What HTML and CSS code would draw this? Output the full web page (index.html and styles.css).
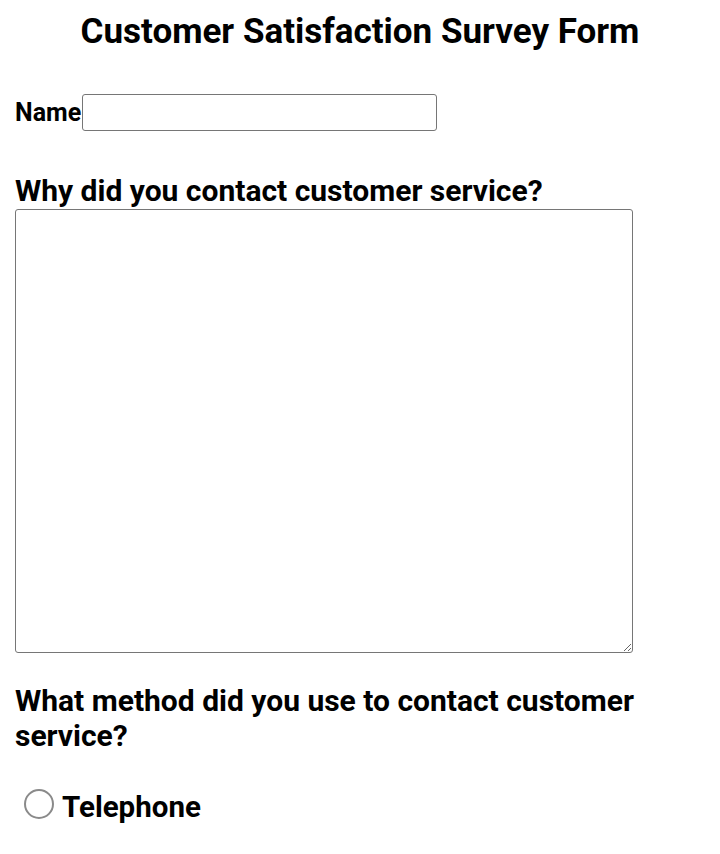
FILE: index.html
```html
<!DOCTYPE html>
<html>
<head>
<meta charset="utf-8">
<link rel="stylesheet" href="styles.css">
</head>
<body>
<h1 class="title">Customer Satisfaction Survey Form</h1>
<form class="form">
  <div class="name-row">
    <label class="name-label" for="name">Name</label><input class="name-input" id="name" type="text">
  </div>
  <label class="question" for="why">Why did you contact customer service?</label>
  <textarea class="why" id="why"></textarea>
  <p class="question method">What method did you use to contact customer service?</p>
  <label class="radio-row"><input class="radio" type="radio" name="method"><span class="radio-text">Telephone</span></label>
</form>
</body>
</html>
```
FILE: styles.css
```css
html, body {
  margin: 0;
  padding: 0;
  background: #fff;
}
body {
  font-family: Roboto, "Noto Sans", sans-serif;
  color: #000;
  padding: 0 15px;
}
.title {
  margin: 12px 0 0;
  font-size: 35px;
  font-weight: 700;
  text-align: center;
  line-height: 40px;
}
.form {
  display: flex;
  flex-direction: column;
  align-items: flex-start;
}
.name-row {
  display: flex;
  align-items: center;
  margin-top: 42px;
}
.name-label {
  font-size: 25px;
  font-weight: 700;
  margin-right: 1px;
}
.name-input {
  width: 355px;
  height: 37px;
  box-sizing: border-box;
  border: 1px solid #767676;
  border-radius: 3px;
  margin: 0;
}
.question {
  font-size: 30px;
  font-weight: 700;
  line-height: 35px;
  margin: 42px 0 0;
}
.why {
  width: 618px;
  height: 444px;
  box-sizing: border-box;
  border: 1px solid #767676;
  border-radius: 3px;
  margin: 1px 0 0;
  resize: both;
}
.method {
  margin-top: 30px;
  width: 640px;
}
.radio-row {
  display: flex;
  align-items: flex-start;
  margin-top: 37px;
  padding-left: 9px;
}
.radio {
  appearance: none;
  -webkit-appearance: none;
  width: 30px;
  height: 30px;
  box-sizing: border-box;
  border: 2px solid #8a8a8a;
  border-radius: 50%;
  background: #fff;
  margin: -1px 8px 0 0;
}
.radio-text {
  font-size: 29.5px;
  font-weight: 700;
  line-height: 35px;
}
```
